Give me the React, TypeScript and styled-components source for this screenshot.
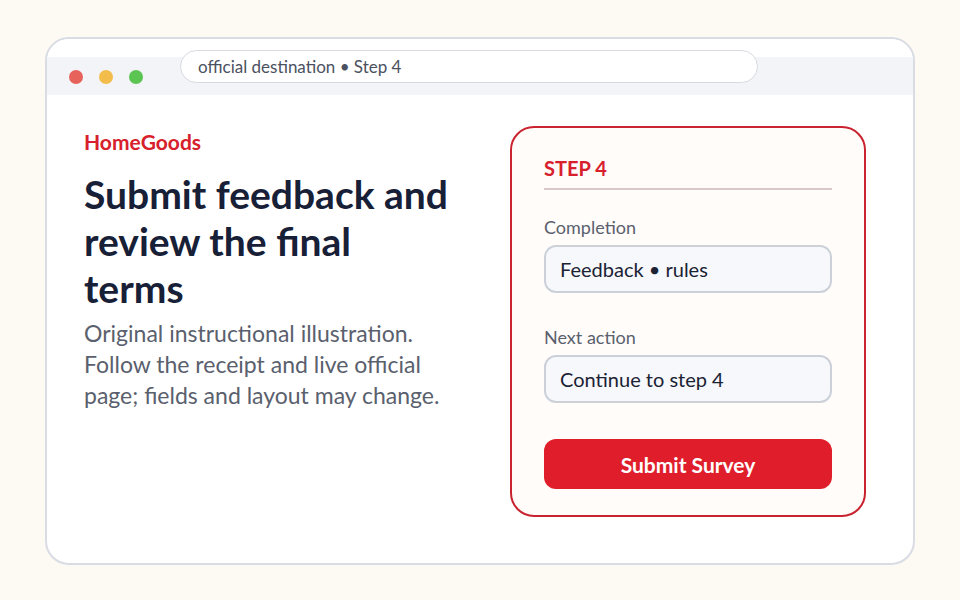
import styled, { createGlobalStyle } from "styled-components";

const GlobalStyle = createGlobalStyle`
  html, body {
    margin: 0;
    padding: 0;
    background: #fdf9f3;
    font-family: Lato, "Noto Sans", sans-serif;
  }
  * {
    box-sizing: border-box;
  }
`;

const Page = styled.div`
  width: 960px;
  height: 600px;
  display: flex;
  justify-content: center;
  padding-top: 37px;
`;

const Window = styled.div`
  width: 870px;
  height: 528px;
  background: #fff;
  border: 2px solid #d9dce4;
  border-radius: 24px;
  overflow: hidden;
  display: flex;
  flex-direction: column;
`;

const TopBar = styled.div`
  height: 56px;
  flex: none;
  display: flex;
  align-items: flex-start;
  padding-left: 22px;
  background: linear-gradient(to bottom, #fff 0, #fff 18px, #f2f4f7 18px);
`;

const Dots = styled.div`
  display: flex;
  gap: 16px;
  margin-top: 31px;
`;

const Dot = styled.span<{ $color: string }>`
  width: 14px;
  height: 14px;
  border-radius: 50%;
  background: ${(p) => p.$color};
`;

const Address = styled.div`
  margin-top: 11px;
  margin-left: 37px;
  width: 578px;
  height: 33px;
  border: 1px solid #d6d9df;
  border-radius: 17px;
  background: #fff;
  display: flex;
  align-items: center;
  padding-left: 17px;
  font-size: 17px;
  color: #4b5160;
`;

const Body = styled.div`
  flex: 1;
  display: flex;
  justify-content: space-between;
  padding: 31px 47px 0 37px;
`;

const Intro = styled.div`
  width: 372px;
  padding-top: 3px;
`;

const Brand = styled.div`
  font-size: 21px;
  font-weight: 700;
  color: #d7202c;
  line-height: 26px;
`;

const Heading = styled.h1`
  margin: 16px 0 0;
  font-size: 39px;
  line-height: 47px;
  font-weight: 700;
  color: #172036;
`;

const Lead = styled.p`
  margin: 6px 0 0;
  font-size: 23px;
  line-height: 31px;
  color: #5a606d;
`;

const Card = styled.div`
  width: 356px;
  height: 391px;
  border: 2px solid #c8232f;
  border-radius: 24px;
  background: #fffcfa;
  padding: 28px 32px 0;
`;

const StepTitle = styled.div`
  font-size: 20px;
  font-weight: 700;
  color: #d7202c;
  line-height: 25px;
  padding-bottom: 7px;
  border-bottom: 2px solid #dcc8ca;
`;

const Field = styled.div<{ $top: number }>`
  margin-top: ${(p) => p.$top}px;
`;

const Label = styled.div`
  font-size: 18px;
  line-height: 22px;
  color: #5a606d;
`;

const Value = styled.div`
  margin-top: 7px;
  height: 48px;
  border: 2px solid #ccd1d9;
  border-radius: 12px;
  background: #f6f8fb;
  display: flex;
  align-items: center;
  padding-left: 14px;
  font-size: 20px;
  color: #1b2234;
`;

const Submit = styled.button`
  margin-top: 36px;
  width: 100%;
  height: 50px;
  border: none;
  border-radius: 12px;
  background: #e01e2b;
  color: #fff;
  font-family: Lato, "Noto Sans", sans-serif;
  font-size: 21px;
  font-weight: 700;
`;

export default function App() {
  return (
    <>
      <GlobalStyle />
      <Page>
        <Window>
          <TopBar>
            <Dots>
              <Dot $color="#e8625c" />
              <Dot $color="#f3bd4b" />
              <Dot $color="#5bc453" />
            </Dots>
            <Address>official destination • Step 4</Address>
          </TopBar>
          <Body>
            <Intro>
              <Brand>HomeGoods</Brand>
              <Heading>Submit feedback and review the final terms</Heading>
              <Lead>
                Original instructional illustration. Follow the receipt and
                live official page; fields and layout may change.
              </Lead>
            </Intro>
            <Card>
              <StepTitle>STEP 4</StepTitle>
              <Field $top={26}>
                <Label>Completion</Label>
                <Value>Feedback • rules</Value>
              </Field>
              <Field $top={33}>
                <Label>Next action</Label>
                <Value>Continue to step 4</Value>
              </Field>
              <Submit>Submit Survey</Submit>
            </Card>
          </Body>
        </Window>
      </Page>
    </>
  );
}
